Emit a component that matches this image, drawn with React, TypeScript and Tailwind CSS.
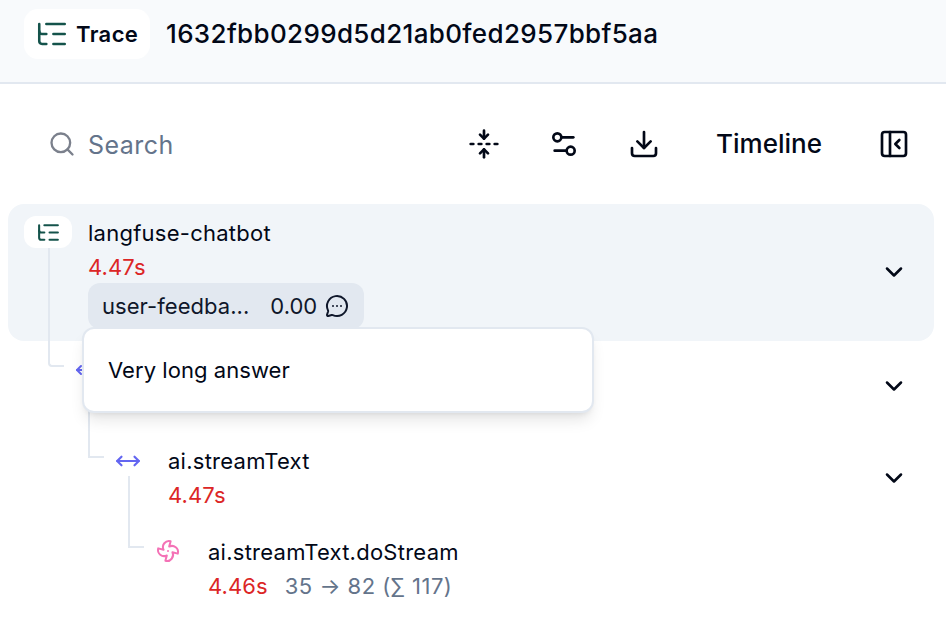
import { ChevronDown, Download, Fan, FoldVertical, ListTree, MessageCircleMore, MoveHorizontal, PanelLeftClose, Search, Settings2 } from "lucide-react";

function Chevron({ className = "" }: { className?: string }) {
  return <ChevronDown size={28} strokeWidth={2.2} className={`shrink-0 text-[#020817] ${className}`} />;
}

function Duration({ value }: { value: string }) {
  return <span className="tracking-[0.1px] text-[#dc2626]">{value}</span>;
}

export default function App() {
  return (
    <div className="relative h-[628px] w-[946px] overflow-hidden bg-white font-['Inter',sans-serif] text-[22px] leading-[34px] text-[#020817]">
      {/* header */}
      <header className="flex h-[84px] items-start gap-4 border-b-2 border-[#e2e8f0] bg-[#f8fafc] pl-6 pt-[9px]">
        <div className="flex h-[50px] w-[126px] items-center gap-[9px] rounded-[14px] bg-white pl-[13px]">
          <ListTree size={34} strokeWidth={1.8} className="-mx-0.5 text-[#14534b]" />
          <span className="text-[22px] font-semibold tracking-[0.4px]">Trace</span>
        </div>
        <span className="mt-[7px] text-[26px] font-medium leading-9 tracking-[0.35px]">1632fbb0299d5d21ab0fed2957bbf5aa</span>
      </header>

      {/* toolbar */}
      <div className="mt-[41px] flex h-10 items-center pl-12 pr-[36px]">
        <Search size={28} strokeWidth={2} className="-mt-0.5 text-[#7b808c]" />
        <span className="ml-3 flex-1 text-[25px] tracking-[0.45px] text-[#64748b]">Search</span>
        <div className="-mt-0.5 flex items-center gap-[48px]">
          <FoldVertical size={32} strokeWidth={2} />
          <Settings2 size={32} strokeWidth={2} />
          <Download size={32} strokeWidth={2} />
          <span className="ml-2 mr-2 text-[26px] font-medium">Timeline</span>
          <PanelLeftClose size={32} strokeWidth={2} />
        </div>
      </div>

      {/* tree */}
      <div className="mt-[39px] pl-2 pr-3">
        <div className="flex h-[137px] items-center rounded-2xl bg-[#f1f5f9] pl-4 pr-[26px]">
          <div className="flex flex-1 gap-4 self-start pt-3">
            <div className="flex h-8 w-12 items-center justify-center rounded-xl bg-white">
              <ListTree size={25} strokeWidth={2} className="text-[#14534b]" />
            </div>
            <div className="flex flex-col tracking-[0.25px]">
              <span>langfuse-chatbot</span>
              <Duration value="4.47s" />
              <div className="-mt-px flex h-[46px] w-[276px] items-center rounded-xl bg-[#e2e8f0] pl-3.5 text-[#0f172a]">
                <span className="tracking-[0.05px]">user-feedba...</span>
                <span className="ml-[21px] tracking-normal">0.00</span>
                <MessageCircleMore size={24} strokeWidth={2} className="ml-2" />
              </div>
            </div>
          </div>
          <Chevron className="mb-0.5" />
        </div>

        {/* row hidden under the popover */}
        <div className="flex h-[88px] items-center justify-between pl-[67px] pr-[26px]">
          <MoveHorizontal size={24} className="-mt-[30px] text-[#6366f1]" />
          <Chevron className="mt-0.5" />
        </div>

        <div className="flex h-[106px] items-start pr-[26px]">
          <div className="ml-[107px] mt-[15px] flex flex-1 gap-[27px] tracking-[0.25px]">
            <MoveHorizontal size={26} className="mt-1 text-[#6366f1]" />
            <div className="flex flex-col">
              <span>ai.streamText</span>
              <Duration value="4.47s" />
            </div>
          </div>
          <Chevron className="mt-[35px]" />
        </div>

        <div className="ml-[148px] flex gap-7 tracking-[0.25px]">
          <Fan size={24} strokeWidth={2} className="mt-1 text-[#f472b6]" />
          <div className="flex flex-col">
            <span>ai.streamText.doStream</span>
            <div className="flex gap-4">
              <Duration value="4.46s" />
              <span className="ml-px tracking-[0.5px] text-[#64748b]">35 → 82 (∑ 117)</span>
            </div>
          </div>
        </div>
      </div>

      {/* tree connectors */}
      <div className="absolute left-[48px] top-[248px] h-[119px] w-4 rounded-bl-sm border-b-2 border-l-2 border-[#e2e8f0]" />
      <div className="absolute left-[88px] top-[410px] h-[48px] w-4 border-b-2 border-l-2 border-[#e2e8f0]" />
      <div className="absolute left-[128px] top-[476px] h-[72px] w-4 border-b-2 border-l-2 border-[#e2e8f0]" />

      {/* score comment popover */}
      <div className="absolute left-[82px] top-[327px] flex h-[86px] w-[512px] items-center rounded-xl border-2 border-[#e2e8f0] bg-white pl-6 tracking-[0.05px] shadow-lg">
        Very long answer
      </div>
    </div>
  );
}
